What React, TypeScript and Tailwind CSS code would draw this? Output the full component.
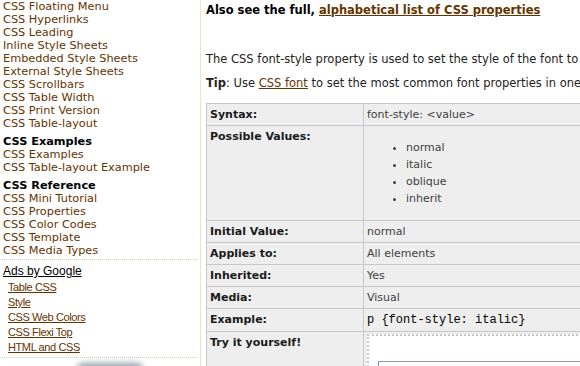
import React from 'react';

const topLinks = [
  'CSS Floating Menu',
  'CSS Hyperlinks',
  'CSS Leading',
  'Inline Style Sheets',
  'Embedded Style Sheets',
  'External Style Sheets',
  'CSS Scrollbars',
  'CSS Table Width',
  'CSS Print Version',
  'CSS Table-layout',
];

const exampleLinks = ['CSS Examples', 'CSS Table-layout Example'];

const referenceLinks = [
  'CSS Mini Tutorial',
  'CSS Properties',
  'CSS Color Codes',
  'CSS Template',
  'CSS Media Types',
];

const adLinks = ['Table CSS', 'Style', 'CSS Web Colors', 'CSS Flexi Top', 'HTML and CSS'];

const simpleRows = [
  { label: 'Initial Value:', value: 'normal' },
  { label: 'Applies to:', value: 'All elements' },
  { label: 'Inherited:', value: 'Yes' },
  { label: 'Media:', value: 'Visual' },
];

function NavLink({ text }: { text: string }) {
  return <a className="block h-[13px] leading-[13px] text-[#663300] whitespace-nowrap">{text}</a>;
}

function Sidebar() {
  return (
    <div className="w-[201px] shrink-0 border-r border-[#ede5c5] bg-white pl-[3px] text-[11.3px] font-['Verdana','DejaVu_Sans',sans-serif]">
      {topLinks.map((t) => (
        <NavLink key={t} text={t} />
      ))}

      <div className="mt-[5px] font-bold leading-[13px] text-black">CSS Examples</div>
      {exampleLinks.map((t) => (
        <NavLink key={t} text={t} />
      ))}

      <div className="mt-[5px] font-bold leading-[13px] text-black">CSS Reference</div>
      {referenceLinks.map((t) => (
        <NavLink key={t} text={t} />
      ))}

      {/* Ads */}
      <div className="-ml-[3px] mt-[2px] mr-[3px] border-t border-dotted border-[#d8d0a8] pt-[4px] pl-[3px] font-['Arial','Liberation_Sans',sans-serif]">
        <div className="text-[12px] leading-[15px] text-black underline">Ads by Google</div>
        <div className="mt-[1px] pl-[5px]">
          {adLinks.map((t) => (
            <a key={t} className="block text-[11px] leading-[15px] tracking-[-0.4px] text-[#663300] underline">
              {t}
            </a>
          ))}
        </div>
      </div>
      <div className="-ml-[3px] mt-[2px] mr-[3px] border-t border-dotted border-[#d8d0a8]" />
      <div className="ml-[74px] mt-[5px] h-[12px] w-[66px] rounded-full bg-gray-400 blur-[3px]" />
    </div>
  );
}

function Label({ children }: { children: React.ReactNode }) {
  return (
    <td className="w-[157px] border border-[#c8c8c8] px-[3px] py-[4px] align-top text-[11px] font-bold leading-[13px] text-[#1a1a1a]">
      {children}
    </td>
  );
}

function Value({ children }: { children: React.ReactNode }) {
  return (
    <td className="border border-[#c8c8c8] px-[3px] py-[4px] align-top text-[11px] leading-[13px] text-[#404040]">
      {children}
    </td>
  );
}

export default function App() {
  return (
    <div className="flex h-[366px] w-[580px] overflow-hidden bg-white">
      <Sidebar />

      <div className="min-w-0 flex-1 overflow-hidden pl-[5px] pt-[3px] text-[11.5px] text-[#111] font-['Verdana','DejaVu_Sans',sans-serif]">
        <div className="whitespace-nowrap font-bold leading-[14px] text-black">
          Also see the full, <a className="text-[#663300] underline">alphabetical list of CSS properties</a>
        </div>

        <p className="mt-[35px] whitespace-nowrap leading-[14px] text-[#222]">
          The CSS font-style property is used to set the style of the font to
        </p>

        <p className="mt-[10px] whitespace-nowrap leading-[14px] text-[#222]">
          <b>Tip</b>: Use <a className="text-[#663300] underline">CSS font</a> to set the most common font properties in one
        </p>

        <table className="mt-[13px] w-[520px] border-collapse bg-[#eeeeee]">
          <tbody>
            <tr>
              <Label>Syntax:</Label>
              <Value>font-style: &lt;value&gt;</Value>
            </tr>
            <tr>
              <Label>Possible Values:</Label>
              <Value>
                <ul className="my-[9px] list-disc pl-[39px]">
                  {['normal', 'italic', 'oblique', 'inherit'].map((v) => (
                    <li key={v} className="leading-[17px]">
                      {v}
                    </li>
                  ))}
                </ul>
              </Value>
            </tr>
            {simpleRows.map((r) => (
              <tr key={r.label}>
                <Label>{r.label}</Label>
                <Value>{r.value}</Value>
              </tr>
            ))}
            <tr>
              <Label>Example:</Label>
              <Value>
                <span className="font-['Courier_New','Liberation_Mono',monospace] text-[12px] text-black">
                  p {'{'}font-style: italic{'}'}
                </span>
              </Value>
            </tr>
            <tr>
              <Label>Try it yourself!</Label>
              <td className="border border-[#c8c8c8] px-[3px] pt-[2px] align-top">
                <div className="h-[60px] border-2 border-dotted border-[#c8c8c8] bg-white pl-[9px] pt-[25px]">
                  <div className="h-[40px] border border-[#7f9db9] bg-white px-[3px] pt-[3px] font-['Courier_New','Liberation_Mono',monospace] text-[12px] text-black">
                    &lt;p style="font-style:normal"&gt;
                  </div>
                </div>
              </td>
            </tr>
          </tbody>
        </table>
      </div>
    </div>
  );
}
